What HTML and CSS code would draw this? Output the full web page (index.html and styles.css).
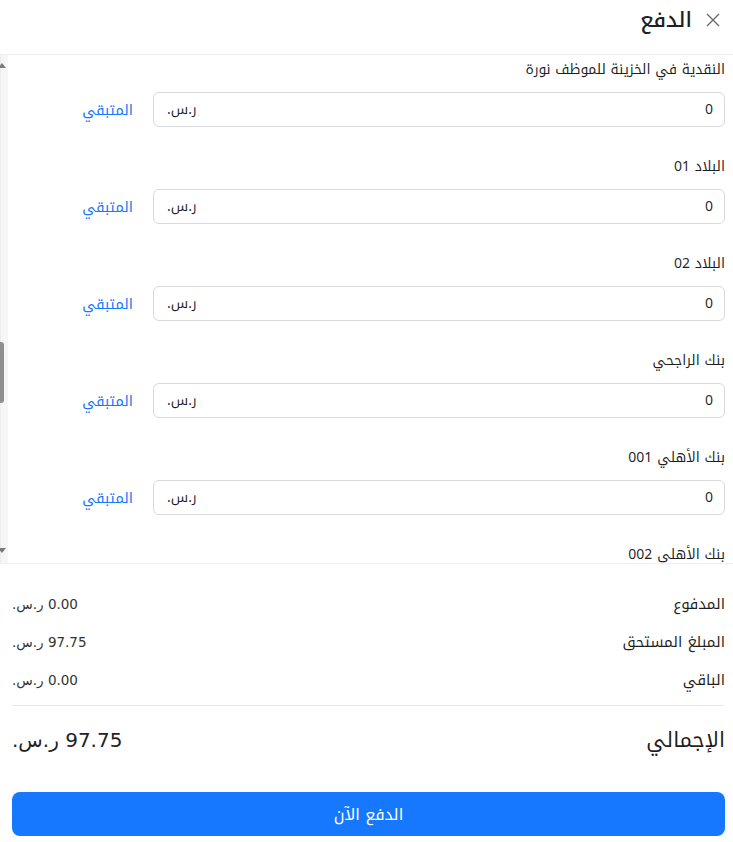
FILE: index.html
```html
<!DOCTYPE html>
<html lang="ar" dir="rtl">
<head>
<meta charset="utf-8">
<title>الدفع</title>
<link rel="stylesheet" href="styles.css">
</head>
<body>
<div class="modal">
  <header class="head">
    <span class="close" aria-label="إغلاق">
      <svg width="14" height="14" viewBox="0 0 14 14"><path d="M1 1 L13 13 M13 1 L1 13" stroke="#6b6b6b" stroke-width="1.4" fill="none"/></svg>
    </span>
    <h1 class="title">الدفع</h1>
  </header>

  <div class="scroll-wrap">
    <div class="scroll">
      <div class="item">
        <div class="label">النقدية في الخزينة للموظف نورة</div>
        <div class="row">
          <div class="field"><span class="val">0</span><span class="cur">ر.س.</span></div>
          <a class="rest">المتبقي</a>
        </div>
      </div>
      <div class="item">
        <div class="label">البلاد 01</div>
        <div class="row">
          <div class="field"><span class="val">0</span><span class="cur">ر.س.</span></div>
          <a class="rest">المتبقي</a>
        </div>
      </div>
      <div class="item">
        <div class="label">البلاد 02</div>
        <div class="row">
          <div class="field"><span class="val">0</span><span class="cur">ر.س.</span></div>
          <a class="rest">المتبقي</a>
        </div>
      </div>
      <div class="item">
        <div class="label">بنك الراجحي</div>
        <div class="row">
          <div class="field"><span class="val">0</span><span class="cur">ر.س.</span></div>
          <a class="rest">المتبقي</a>
        </div>
      </div>
      <div class="item">
        <div class="label">بنك الأهلي 001</div>
        <div class="row">
          <div class="field"><span class="val">0</span><span class="cur">ر.س.</span></div>
          <a class="rest">المتبقي</a>
        </div>
      </div>
      <div class="item">
        <div class="label">بنك الأهلي 002</div>
        <div class="row">
          <div class="field"><span class="val">0</span><span class="cur">ر.س.</span></div>
          <a class="rest">المتبقي</a>
        </div>
      </div>
    </div>
    <div class="sbar">
      <span class="arrow up"></span>
      <span class="thumb"></span>
      <span class="arrow down"></span>
    </div>
  </div>

  <section class="summary">
    <div class="line"><span>المدفوع</span><span class="num">0.00 ر.س.</span></div>
    <div class="line"><span>المبلغ المستحق</span><span class="num">97.75 ر.س.</span></div>
    <div class="line"><span>الباقي</span><span class="num">0.00 ر.س.</span></div>
    <div class="divider"></div>
    <div class="total"><span>الإجمالي</span><span class="num">97.75 ر.س.</span></div>
    <button class="pay">الدفع الآن</button>
  </section>
</div>
</body>
</html>
```
FILE: styles.css
```css
* { box-sizing: border-box; }
html, body { margin: 0; padding: 0; background: #fff; }
body {
  font-family: "Noto Kufi Arabic", "Noto Sans Arabic", "Noto Sans", "DejaVu Sans", sans-serif;
  color: rgba(0,0,0,0.88);
  font-size: 14px;
}
.modal { width: 733px; height: 842px; display: flex; flex-direction: column; }
.head {
  height: 55px;
  border-bottom: 1px solid #f0f0f0;
  display: flex;
  align-items: center;
  gap: 14px;
  padding: 0 13px 14px 0;
}
.close { display: flex; width: 14px; height: 14px; }
.title { margin: 0; font-size: 21px; font-weight: 500; line-height: 28px; color: #1f1f1f; }

.scroll-wrap { position: relative; height: 509px; border-bottom: 1px solid #f0f0f0; overflow: hidden; }
.scroll { padding: 5px 8px 0 20px; }
.item { padding-bottom: 30px; }
.label { line-height: 20px; height: 20px; margin-bottom: 12px; }
.row { display: flex; align-items: center; }
.field {
  flex: 1;
  height: 35px;
  border: 1px solid #d9d9d9;
  border-radius: 6px;
  display: flex;
  align-items: center;
  justify-content: space-between;
  padding: 0 11px 0 13px;
}
.val { font-size: 14px; }
.cur { font-size: 14px; }
.rest { width: 113px; margin-right: 20px; color: #1677ff; font-size: 14.5px; }

.sbar {
  position: absolute; left: 0; top: 0; bottom: 0; width: 8px;
  background: #f6f6f6; border-left: 1px solid #ececec;
  direction: ltr;
}
.arrow { position: absolute; left: -3px; width: 0; height: 0; border-left: 4px solid transparent; border-right: 4px solid transparent; }
.arrow.up { top: 8px; border-bottom: 5px solid #7a7a7a; }
.arrow.down { bottom: 10px; border-top: 5px solid #7a7a7a; }
.thumb { position: absolute; left: -4px; top: 287px; width: 7px; height: 61px; background: #8f8f8f; border-radius: 3px; }

.summary { padding: 27px 8px 0 12px; }
.line { display: flex; justify-content: space-between; align-items: center; line-height: 26px; margin-bottom: 12px; font-size: 15px; }
.line:nth-child(3) { margin-bottom: 12px; }
.num { font-family: "DejaVu Sans", sans-serif; font-size: 13.5px; color: #333; }
.divider { height: 1px; background: #eaeaea; margin: 0 0 18px 0; }
.total { display: flex; justify-content: space-between; align-items: center; line-height: 32px; font-size: 21px; }
.total .num { font-size: 20px; color: #222; }
.pay {
  display: block; width: 100%; height: 44px; margin-top: 36px;
  background: #1677ff; color: #fff; border: 0; border-radius: 8px;
  font-family: inherit; font-size: 16px;
}
```
